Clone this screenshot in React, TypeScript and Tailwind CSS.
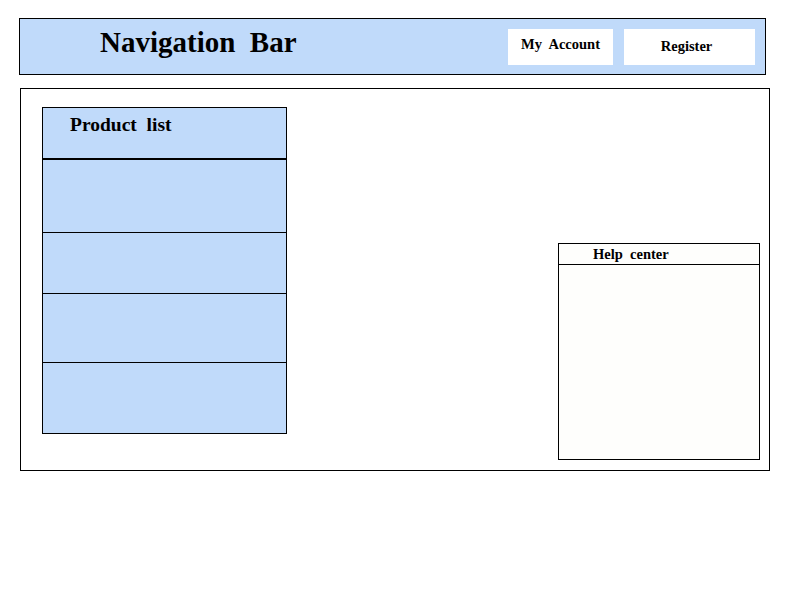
const serif = { fontFamily: '"Liberation Serif", "Times New Roman", serif' };

const NavButton = ({ children, className }: { children: React.ReactNode; className: string }) => {
  return (
    <div className={`flex h-[36px] items-center justify-center bg-white text-[14.5px] font-bold whitespace-pre ${className}`}>
      {children}
    </div>
  );
};

const App = () => {
  return (
    <div className="h-[600px] w-[800px] bg-white pt-[18px] text-black" style={serif}>
      <header className="ml-[19px] flex h-[57px] w-[747px] items-center justify-between border border-black bg-[#c0dafa] pr-[10px]">
        <h1 className="pb-[9px] pl-[80px] text-[29px] leading-none font-bold whitespace-pre">Navigation  Bar</h1>
        <div className="flex gap-[11px]">
          <NavButton className="w-[105px] pb-[4px]">My  Account</NavButton>
          <NavButton className="w-[131px] pr-[6px]">Register</NavButton>
        </div>
      </header>

      <main className="mt-[13px] ml-[20px] flex h-[383px] w-[750px] items-start justify-between border border-black">
        <section className="mt-[18px] ml-[21px] w-[245px] border border-black bg-[#c0dafa]">
          <div className="h-[52px] border-b-2 border-black pt-[2px] pl-[27px] text-[19.5px] font-bold whitespace-pre">
            Product  list
          </div>
          <div className="h-[73px] border-b border-black" />
          <div className="h-[61px] border-b border-black" />
          <div className="h-[69px] border-b border-black" />
          <div className="h-[70px]" />
        </section>

        <section className="mt-[154px] mr-[9px] h-[217px] w-[202px] border border-black bg-[#fefefc]">
          <div className="h-[21px] border-b border-black pt-[2px] pl-[34px] text-[14.5px] leading-[16px] font-bold whitespace-pre">
            Help  center
          </div>
        </section>
      </main>
    </div>
  );
};

export default App;
